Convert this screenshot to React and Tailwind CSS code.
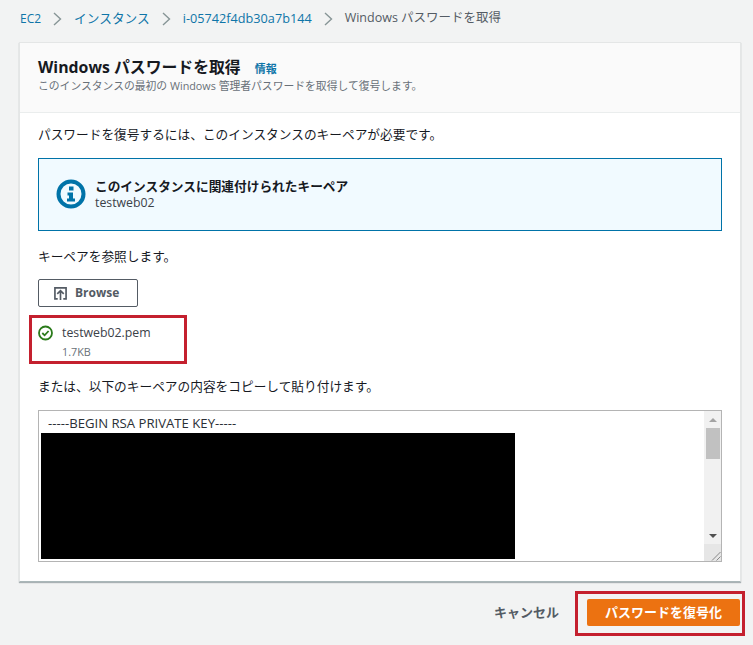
function Chevron() {
    return (
        <svg width="9" height="14" viewBox="0 0 9 14" fill="none" className="shrink-0">
            <path d="M1 1l6.5 6L1 13" stroke="#879596" strokeWidth="1.4" />
        </svg>
    );
}

function InfoIcon() {
    return (
        <svg width="30" height="30" viewBox="0 0 30 30" className="shrink-0 mb-[2px]">
            <circle cx="15" cy="15" r="12.5" fill="none" stroke="#0073a8" strokeWidth="4" />
            <rect x="13" y="7.5" width="4.5" height="4" fill="#0073a8" />
            <path d="M11.5 13.5h5.5v6h2v3h-8v-3h2v-3h-1.500z" fill="#0073a8" />
        </svg>
    );
}

function UploadIcon() {
    return (
        <svg width="13" height="13" viewBox="0 0 14 14" fill="none" className="shrink-0">
            <path d="M4 12.800H1V1h12v11.800h-3" stroke="#545b64" strokeWidth="1.800" />
            <path d="M3.500 7.500L7 4l3.500 3.500M7 4.500V14" stroke="#545b64" strokeWidth="1.800" />
        </svg>
    );
}

function CheckIcon() {
    return (
        <svg width="16" height="16" viewBox="0 0 16 16" fill="none" className="shrink-0">
            <circle cx="7.500" cy="8" r="6.500" stroke="#2a7a1a" strokeWidth="1.800" />
            <path d="M4.300 8l2.300 2.300 4-4.300" stroke="#2a7a1a" strokeWidth="1.800" />
        </svg>
    );
}

function Scrollbar() {
    return (
        <div className="w-[17px] shrink-0 flex flex-col bg-[#f1f1f1]">
            <div className="h-[17px] flex items-center justify-center">
                <div className="w-0 h-0 border-x-4 border-x-transparent border-b-4 border-b-[#a3a3a3]" />
            </div>
            <div className="h-[31px] w-[14px] mx-auto bg-[#c1c1c1]" />
            <div className="flex-1" />
            <div className="h-[17px] flex items-center justify-center">
                <div className="w-0 h-0 border-x-4 border-x-transparent border-t-4 border-t-[#505050]" />
            </div>
            <div className="h-[17px] bg-[#e6e6e6] flex items-end justify-end">
                <svg width="10" height="10" viewBox="0 0 10 10" fill="none">
                    <path d="M1 9.500L9.500 1M5.500 9.500L9.500 5.500" stroke="#6f6f6f" strokeWidth="0.800" />
                </svg>
            </div>
        </div>
    );
}

export default function App() {
    return (
        <div className="w-[753px] h-[645px] overflow-hidden bg-[#f2f3f3] text-[#16191f] text-[12.7px] font-['Open_Sans','Noto_Sans_CJK_JP',sans-serif]">
            <div className="h-[42px] pl-[20px] pb-[5px] flex items-center gap-[12px]">
                <span className="text-[12px] text-[#0f75a8]">EC2</span>
                <Chevron />
                <span className="text-[#0f75a8]">インスタンス</span>
                <Chevron />
                <span className="text-[#0f75a8]">i-05742f4db30a7b144</span>
                <Chevron />
                <span className="text-[12.500px] text-[#545b64]">Windows パスワードを取得</span>
            </div>

            <div className="mx-[19px] w-[722px] h-[540px] bg-white border border-[#e4e6e6] border-b-[#aab7b8] shadow-[0_1px_1px_rgba(0,28,36,0.3)]">
                <div className="h-[70px] bg-[#fafafa] border-b border-[#eaeded] pl-[18px] pt-[12px]">
                    <div className="flex items-baseline gap-[14px]">
                        <h1 className="text-[15.850px] leading-[24px] font-bold">Windows パスワードを取得</h1>
                        <span className="text-[11px] font-bold text-[#0f75a8]">情報</span>
                    </div>
                    <p className="text-[10.800px] leading-[14px] text-[#687078]">このインスタンスの最初の Windows 管理者パスワードを取得して復号します。</p>
                </div>

                <div className="pl-[18px] pr-[18px]">
                    <p className="mt-[12px] leading-[18px]">パスワードを復号するには、このインスタンスのキーペアが必要です。</p>

                    <div className="mt-[15px] h-[73px] bg-[#f1faff] border border-[#0073a8] flex items-center pl-[17px] gap-[9px]">
                        <InfoIcon />
                        <div className="-mt-[2px]">
                            <div className="font-bold leading-[18px]">このインスタンスに関連付けられたキーペア</div>
                            <div className="text-[12.300px] leading-[16px] text-[#3b4148]">testweb02</div>
                        </div>
                    </div>

                    <p className="mt-[16px] leading-[18px]">キーペアを参照します。</p>

                    <button className="mt-[14px] w-[100px] h-[28px] bg-white border border-[#545b64] rounded-[2px] flex items-center pl-[15px] gap-[8px] font-bold text-[12px] text-[#545b64]">
                        <UploadIcon />
                        Browse
                    </button>

                    <div className="relative mt-[17px] h-[37px]">
                        <div className="flex items-center gap-[8px] h-[18px]">
                            <CheckIcon />
                            <span className="text-[12.300px] text-[#3b4148]">testweb02.pem</span>
                        </div>
                        <div className="ml-[24px] mt-[3px] text-[10.800px] leading-[14px] text-[#687078]">1.7KB</div>
                        <div className="absolute left-[-9px] top-[-9px] w-[158px] h-[49px] border-[3px] border-[#c4202e]" />
                    </div>

                    <p className="mt-[16px] leading-[18px]">または、以下のキーペアの内容をコピーして貼り付けます。</p>

                    <div className="mt-[15px] h-[152px] w-[684px] flex border border-[#b4b4b4] bg-white">
                        <div className="flex-1 min-w-0 pl-[2px]">
                            <div className="pl-[7px] h-[22px] leading-[24px] text-[13.150px] text-[#2a2f36]">-----BEGIN RSA PRIVATE KEY-----</div>
                            <div className="w-[474px] h-[126px] bg-black" />
                        </div>
                        <Scrollbar />
                    </div>
                </div>
            </div>

            <div className="relative mt-[17px] pr-[13px] flex items-center justify-end gap-[28px]">
                <span className="font-bold text-[#545b64] text-[13px]">キャンセル</span>
                <button className="w-[153px] h-[27px] rounded-[2px] bg-[#ec7211] text-white font-bold text-[13px]">パスワードを復号化</button>
                <div className="absolute left-[575px] top-[-8px] w-[170px] h-[45px] border-[3px] border-[#c4202e]" />
            </div>
        </div>
    );
}
